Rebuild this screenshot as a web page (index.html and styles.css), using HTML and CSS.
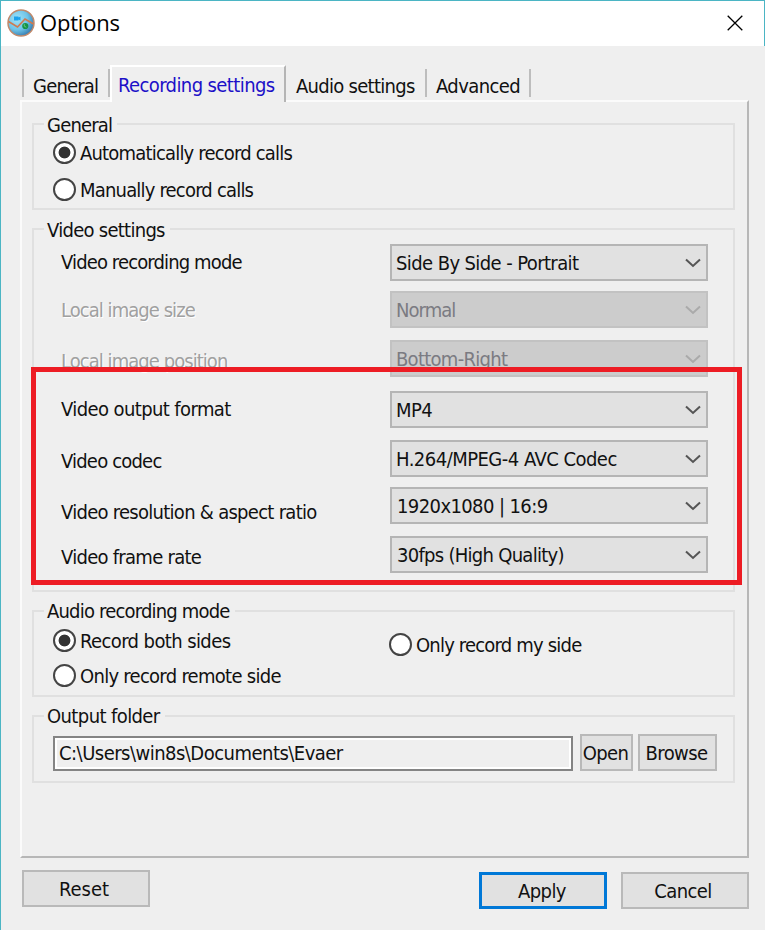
FILE: index.html
```html
<!DOCTYPE html>
<html lang="en">
<head>
<meta charset="utf-8">
<title>Options</title>
<link rel="stylesheet" href="styles.css">
</head>
<body>
<svg class="defs" width="0" height="0"><defs><symbol id="chevron" viewBox="0 0 18 12"><path d="M2 2.500 9 9 16 2.500" fill="none" stroke="currentColor" stroke-width="2"/></symbol></defs></svg>
<div class="window">
  <header class="titlebar">
    <svg class="logo" viewBox="0 0 28 28">
      <defs><radialGradient id="globe" cx=".35" cy=".35" r=".75"><stop offset="0" stop-color="#a4e4f7"/><stop offset=".55" stop-color="#6fc4e8"/><stop offset="1" stop-color="#2a6fa6"/></radialGradient></defs>
      <circle cx="14" cy="14" r="13" fill="url(#globe)" stroke="#c08a6c" stroke-width="1.5"/>
      <path d="M1.500 12.500 10.500 18 18 10 26.500 15" fill="none" stroke="#cf7a50" stroke-width="1.6"/>
      <path d="M7 7.500h4.500v1l2-1v4l-2-1v1H7z" fill="#1aa2ee"/>
      <circle cx="18.300" cy="17" r="3.100" fill="#159447"/><path d="M17.300 15.200v2l2 1" fill="none" stroke="#7fd08c" stroke-width=".8"/>
    </svg>
    <h1>Options</h1>
    <svg class="close" viewBox="0 0 16 16"><path d="M.7.7 15.300 15.300M15.300.7.7 15.300" stroke="#000" stroke-width="1.300"/></svg>
  </header>
  <nav class="tabs">
    <span class="tab first"><b class="t8">General</b></span>
    <span class="tab active"><b>Recording settings</b></span>
    <span class="tab audio"><b class="t7">Audio settings</b></span>
    <span class="tab adv"><b>Advanced</b></span>
  </nav>
  <main class="panel">
    <section class="group general">
      <h2 class="t8">General</h2>
      <label class="option"><i class="radio on"></i><span class="t8">Automatically record calls</span></label>
      <label class="option second"><i class="radio"></i><span class="t8">Manually record calls</span></label>
    </section>
    <section class="group video">
      <h2 class="t7">Video settings</h2>
      <div class="row r1"><span class="name t9">Video recording mode</span><div class="combo"><span>Side By Side - Portrait</span><svg><use href="#chevron"/></svg></div></div>
      <div class="row r2 off"><span class="name t10">Local image size</span><div class="combo"><span class="t10">Normal</span><svg><use href="#chevron"/></svg></div></div>
      <div class="row r3 off"><span class="name t10">Local image position</span><div class="combo"><span class="t7">Bottom-Right</span><svg><use href="#chevron"/></svg></div></div>
      <div class="row r4"><span class="name">Video output format</span><div class="combo"><span>MP4</span><svg><use href="#chevron"/></svg></div></div>
      <div class="row r5"><span class="name t8">Video codec</span><div class="combo"><span class="t5">H.264/MPEG-4 AVC Codec</span><svg><use href="#chevron"/></svg></div></div>
      <div class="row r6"><span class="name t7">Video resolution &amp; aspect ratio</span><div class="combo"><span class="inset">1920x1080 | 16:9</span><svg><use href="#chevron"/></svg></div></div>
      <div class="row r7"><span class="name t7">Video frame rate</span><div class="combo"><span class="t7 inset">30fps (High Quality)</span><svg><use href="#chevron"/></svg></div></div>
      <div class="highlight"></div>
    </section>
    <section class="group sound">
      <h2 class="t8">Audio recording mode</h2>
      <div class="columns">
        <div>
          <label class="option"><i class="radio on"></i><span>Record both sides</span></label>
          <label class="option second"><i class="radio"></i><span class="t7">Only record remote side</span></label>
        </div>
        <label class="option mine"><i class="radio"></i><span class="t8">Only record my side</span></label>
      </div>
    </section>
    <section class="group output">
      <h2>Output folder</h2>
      <div class="folder">
        <div class="path"><span class="t5">C:\Users\win8s\Documents\Evaer</span></div>
        <button class="open">Open</button>
        <button class="browse">Browse</button>
      </div>
    </section>
  </main>
  <footer>
    <button class="reset">Reset</button>
    <button class="apply">Apply</button>
    <button class="cancel">Cancel</button>
  </footer>
</div>
</body>
</html>
```
FILE: styles.css
```css
* { box-sizing: border-box; }
body { margin: 0; background: #fff; }
body, button { font: 20px/24px "DejaVu Sans Condensed", "DejaVu Sans", sans-serif; font-stretch: condensed; letter-spacing: -.6px; color: #111; white-space: nowrap; }
h1, h2, b { margin: 0; font-size: inherit; font-weight: 400; }
.t5 { letter-spacing: -.52px; }
.t7 { letter-spacing: -.72px; }
.t8 { letter-spacing: -.81px; }
.t9 { letter-spacing: -.87px; }
.t10 { letter-spacing: -.95px; }
.defs { display: block; height: 0; }
.window { width: 765px; height: 930px; background: #efefef; border-left: 1px solid #4bb5c4; overflow: hidden; }
.titlebar { height: 46px; background: #fff; border-top: 1px solid #4bb5c4; border-right: 1px solid #4bb5c4; display: flex; align-items: center; padding: 0 21px 2px 6px; }
.logo { width: 28px; height: 28px; }
.titlebar h1 { font: 22px/30px "Open Sans", sans-serif; letter-spacing: -.2px; margin-left: 5px; margin-top: -1px; color: #000; flex: 1; }
.close { width: 16px; height: 16px; }

.tabs { display: flex; height: 54px; padding: 19px 0 0 21px; }
.tab { display: block; height: 28px; margin-top: 4px; padding: 5px 0 0 10px; }
.first { width: 88px; border-left: 2px solid #bdbdbd; border-right: 2px solid #bdbdbd; padding-left: 9px; }
.active { width: 176px; height: 37px; margin-top: 0; padding: 6px 0 0 6px; border: 2px solid #fff; border-right-color: #b5b5b5; border-bottom: 0; background: #efefef; color: #1c10c8; z-index: 1; }
.audio { width: 141px; border-right: 2px solid #bdbdbd; }
.adv { width: 104px; border-right: 2px solid #bdbdbd; padding-left: 9px; }

.panel { width: 729px; height: 758px; margin-left: 19px; padding: 21px 12px 0 10px; border: 2px solid #fbfbfb; border-right-color: #b7b7b7; border-bottom-color: #b7b7b7; }
.group { border: 2px solid #e0e0e0; width: 703px; padding: 0; position: relative; }
.group h2 { display: table; background: #efefef; margin: -13px 0 0 10px; padding: 0 5px 0 3px; height: 24px; }
.general { height: 87px; }
.general h2, .video h2 { margin-top: -12px; height: 23px; }
.option { display: flex; align-items: center; height: 24px; margin-left: 19px; }
.general h2 + .option { margin-top: 4px; }
.general .second { margin-top: 13px; }
.radio { width: 23px; height: 23px; border: 2px solid #444; border-radius: 50%; background: #fff; margin: -2px 4px 0 0; flex: none; }
.radio.on { background: radial-gradient(circle, #333 5.500px, #fff 6.300px); }

.video { height: 364px; margin-top: 18px; }
.row { display: grid; grid-template-columns: 329px 318px; margin-left: 27px; height: 37px; align-items: start; }
.combo { height: 37px; border: 2px solid #b5b5b5; background: #e1e1e1; display: flex; align-items: flex-start; justify-content: space-between; padding: 5px 4px 0 4px; }
.combo svg { width: 18px; height: 12px; margin-top: 6px; color: #555; }
.inset { margin-left: 1px; }
.r1 { margin-top: 2px; }
.r1 .name { margin-top: 6px; }
.r2 { margin-top: 10px; }
.r2 .name { margin-top: 7px; }
.r3 { margin-top: 12px; }
.r3 .name { margin-top: 9px; }
.r4 { margin-top: 14px; }
.r4 .name { margin-top: 6px; }
.r5 { margin-top: 12px; }
.r5 .name { margin-top: 9px; }
.r6 { margin-top: 10px; }
.r6 .name { margin-top: 13px; }
.r7 { margin-top: 12px; }
.r7 .name { margin-top: 9px; }
.off { color: #a0a0a0; }
.off .name { text-shadow: 1px 1px #fff; }
.off .combo { background: #ccc; border-color: #c2c2c2; color: #7b7b82; }
.off .combo svg { color: #aaa; }
.highlight { position: absolute; left: -3px; top: 137px; width: 711px; height: 218px; border: 5px solid #ed1c24; }

.sound { height: 87px; margin-top: 18px; }
.columns { display: grid; grid-template-columns: 336px 1fr; margin-top: 6px; }
.sound .second { margin-top: 11px; }
.sound .mine { margin-top: 4px; }

.output { height: 68px; margin-top: 18px; }
.folder { display: flex; margin: 6px 0 0 19px; }
.path { width: 520px; height: 35px; margin-top: 2px; border: 2px solid #848484; box-shadow: inset 0 0 0 2px #fff; padding: 3px 4px; }
button { height: 37px; padding: 0; border: 2px solid #b9b9b9; background: #e1e1e1; border-radius: 0; }
.open { width: 53px; margin-left: 7px; padding-right: 2px; }
.browse { width: 79px; margin-left: 5px; padding-right: 2px; }
footer { display: flex; padding: 12px 16px 0 21px; align-items: flex-start; }
footer button { width: 128px; }
.reset { padding-right: 4px; letter-spacing: 0; }
.apply { margin: 2px 14px 0 auto; padding-right: 2px; border: 3px solid #0078d7; }
.cancel { margin-top: 2px; padding-right: 4px; }
```
